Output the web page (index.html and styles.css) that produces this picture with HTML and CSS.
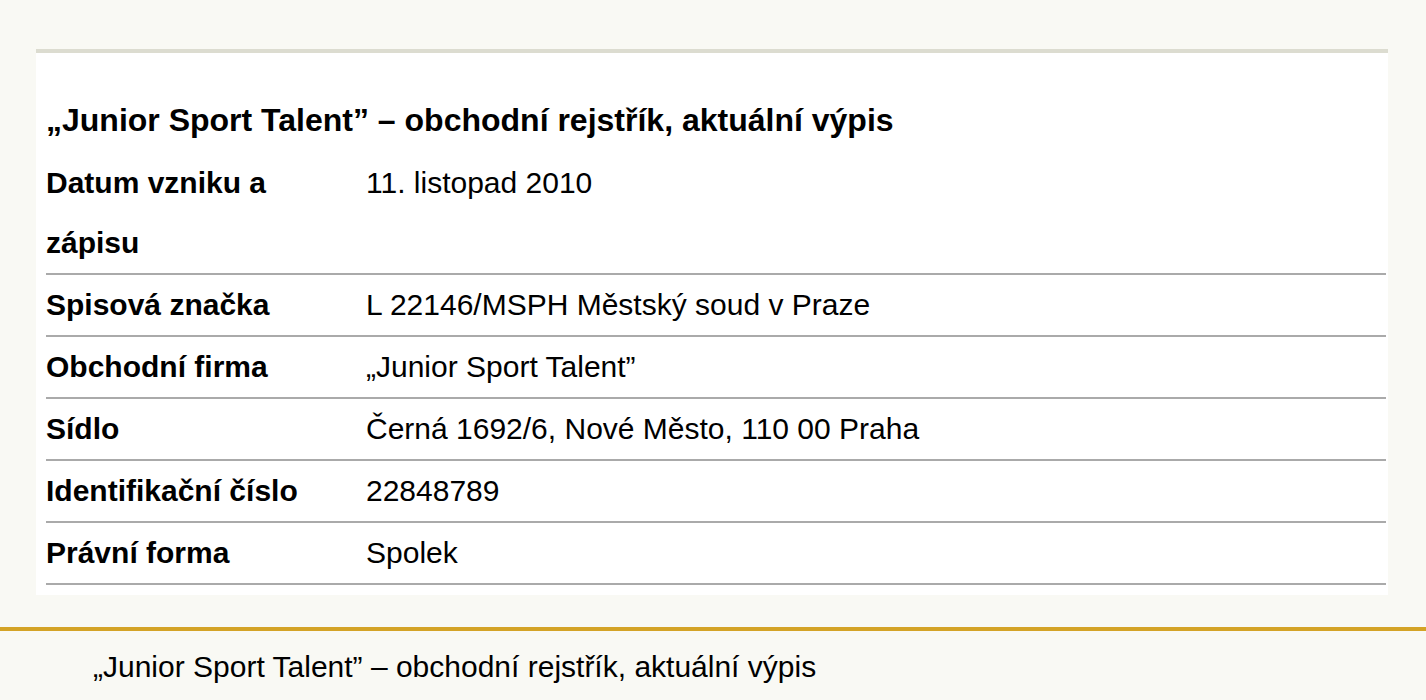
FILE: index.html
```html
<!DOCTYPE html>
<html lang="cs">
<head>
<meta charset="utf-8">
<title>Junior Sport Talent</title>
<link rel="stylesheet" href="styles.css">
</head>
<body>
<main class="page">
  <section class="card">
    <h2 class="card-title">„Junior Sport Talent” – obchodní rejstřík, aktuální výpis</h2>
    <table class="register">
      <tbody>
        <tr><th>Datum vzniku a zápisu</th><td>11. listopad 2010</td></tr>
        <tr><th>Spisová značka</th><td>L 22146/MSPH Městský soud v Praze</td></tr>
        <tr><th>Obchodní firma</th><td>„Junior Sport Talent”</td></tr>
        <tr><th>Sídlo</th><td>Černá 1692/6, Nové Město, 110 00 Praha</td></tr>
        <tr><th>Identifikační číslo</th><td>22848789</td></tr>
        <tr><th>Právní forma</th><td>Spolek</td></tr>
      </tbody>
    </table>
  </section>
</main>
<footer class="footer">
  <p class="footer-text">„Junior Sport Talent” – obchodní rejstřík, aktuální výpis</p>
</footer>
</body>
</html>
```
FILE: styles.css
```css
html, body {
  margin: 0;
  padding: 0;
  background: #f9f9f4;
  color: #000;
  font-family: "Liberation Sans", Arial, sans-serif;
}
.page {
  padding: 49px 38px 32px 36px;
}
.card {
  background: #fff;
  border-top: 4px solid #dcdcd0;
  padding: 0 2px 10px 10px;
}
.card-title {
  margin: 0;
  padding: 47px 0 0;
  font-size: 32px;
  font-weight: bold;
  line-height: 40px;
}
.register {
  width: 100%;
  border-collapse: collapse;
  font-size: 30px;
  margin-top: 13px;
}
.register th,
.register td {
  padding: 0;
  line-height: 60px;
  text-align: left;
  vertical-align: top;
  border-bottom: 2px solid #aaa;
}
.register th {
  width: 320px;
  font-weight: bold;
}
.footer {
  border-top: 4px solid #d4a326;
}
.footer-text {
  margin: 0;
  padding: 16px 0 0 93px;
  font-size: 30px;
  line-height: 40px;
}
```
